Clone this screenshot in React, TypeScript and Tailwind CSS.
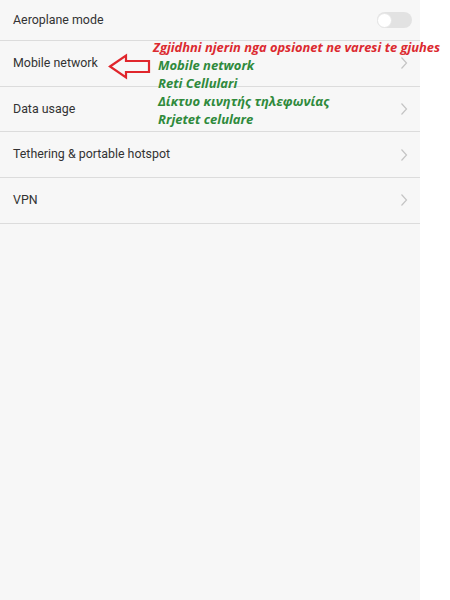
import React from 'react';

const rows = [
    { label: 'Mobile network' },
    { label: 'Data usage' },
    { label: 'Tethering & portable hotspot' },
    { label: 'VPN' },
];

const Chevron = () => (
    <svg width="8" height="14" viewBox="0 0 8 14" className="shrink-0">
        <path d="M1.5 1.5 L6.5 7 L1.5 12.5" fill="none" stroke="#c4c4c4" strokeWidth="1.2" />
    </svg>
);

export default function App() {
    return (
        <div className="w-[450px] h-[600px] bg-white flex font-['Roboto',sans-serif]">
            <div className="relative w-[420px] h-full bg-[#f7f7f7]">
                {/* settings list */}
                <div className="flex items-center justify-between h-[41px] pl-[13px] pr-[8px] border-b border-[#dcdcdc]">
                    <span className="text-[12.4px] text-[#333]">Aeroplane mode</span>
                    <div className="w-[35px] h-[16px] rounded-full bg-[#e2e2e2] flex items-center">
                        <div className="w-[15px] h-[15px] rounded-full bg-white border border-[#e6e6e6]" />
                    </div>
                </div>
                {rows.map((row, i) => (
                    <div key={i} className="flex items-center justify-between h-[45.7px] pl-[13px] pr-[12px] border-b border-[#dcdcdc]">
                        <span className="text-[12.4px] text-[#333]">{row.label}</span>
                        <Chevron />
                    </div>
                ))}

                {/* annotation overlay */}
                <svg className="absolute left-[108px] top-[53px]" width="44" height="27" viewBox="0 0 44 27">
                    <path d="M2 13.5 L18 2.5 L18 8 L41 8 L41 19 L18 19 L18 24.5 Z" fill="none" stroke="#e0262c" strokeWidth="2.2" strokeLinejoin="miter" />
                </svg>
                <div className="absolute left-[153px] top-[38px] text-[12.9px] leading-[18px] font-bold italic text-[#dc2a30] font-['Open_Sans',sans-serif] whitespace-nowrap">
                    Zgjidhni njerin nga opsionet ne varesi te gjuhes
                </div>
                <div className="absolute left-[158px] top-[56px] flex flex-col text-[13px] leading-[18px] font-bold italic text-[#2f8a3c] font-['Open_Sans',sans-serif] whitespace-nowrap">
                    <span>Mobile network</span>
                    <span>Reti Cellulari</span>
                    <span>Δίκτυο κινητής τηλεφωνίας</span>
                    <span>Rrjetet celulare</span>
                </div>
            </div>
        </div>
    );
}
